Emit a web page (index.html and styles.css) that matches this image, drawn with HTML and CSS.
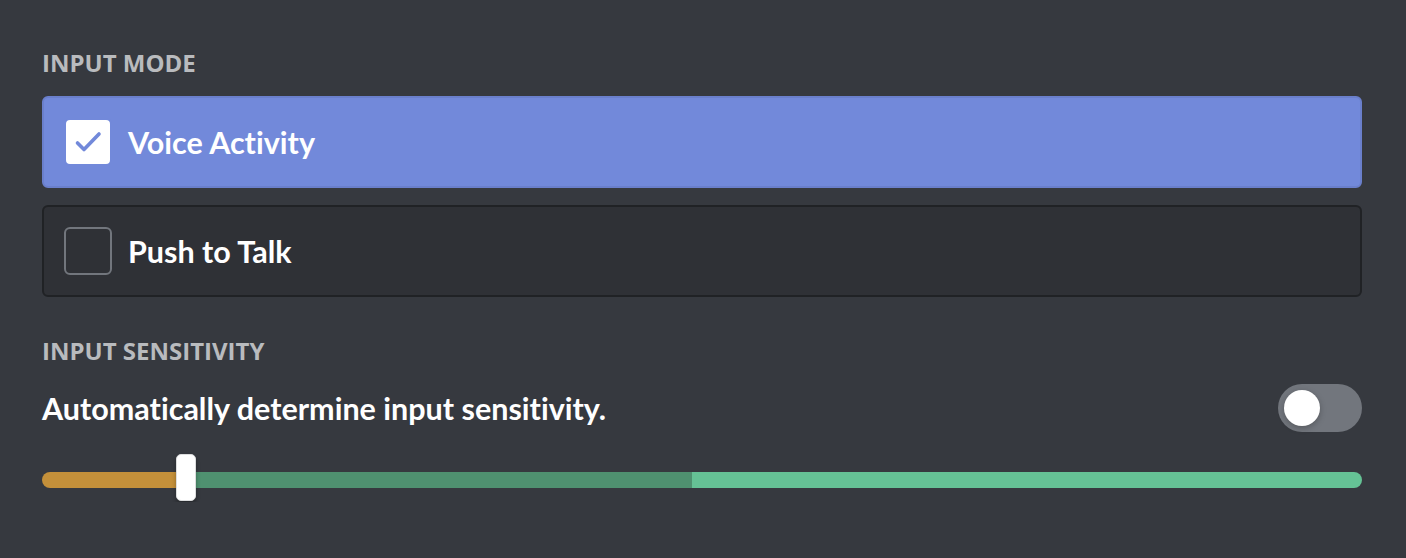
FILE: index.html
```html
<!DOCTYPE html>
<html>
<head>
<meta charset="utf-8">
<link rel="stylesheet" href="styles.css">
</head>
<body>
<main class="settings">
  <h5 class="label">Input Mode</h5>
  <div class="radio-group">
    <div class="option selected">
      <span class="box">
        <svg viewBox="0 0 44 44" width="44" height="44"><polyline points="11.5,23 18,29.5 33,14" fill="none" stroke="#7289da" stroke-width="3.6" stroke-linecap="round" stroke-linejoin="round"/></svg>
      </span>
      <span class="option-text">Voice Activity</span>
    </div>
    <div class="option">
      <span class="box"></span>
      <span class="option-text">Push to Talk</span>
    </div>
  </div>
  <h5 class="label label-sens">Input Sensitivity</h5>
  <div class="auto-row">
    <span class="desc">Automatically determine input sensitivity.</span>
    <span class="toggle"><span class="knob"></span></span>
  </div>
  <div class="slider">
    <div class="track">
      <div class="seg seg-orange" style="width:10.83%"></div>
      <div class="seg seg-dark" style="width:38.41%"></div>
      <div class="seg seg-light" style="width:50.76%"></div>
    </div>
    <div class="thumb" style="left:calc(10.9% - 10px)"></div>
  </div>
</main>
</body>
</html>
```
FILE: styles.css
```css
* { box-sizing: border-box; }
html, body {
  margin: 0;
  background: #36393f;
}
body {
  font-family: "Open Sans", "Noto Sans", sans-serif;
  color: #fff;
}
.settings {
  width: 1320px;
  margin-left: 42px;
  padding-top: 48px;
}
.label {
  margin: 0;
  font-size: 24px;
  line-height: 30px;
  font-weight: 700;
  text-transform: uppercase;
  color: #b9bbbe;
  letter-spacing: 0;
}
.radio-group {
  margin-top: 18px;
  display: flex;
  flex-direction: column;
  gap: 17px;
}
.option {
  height: 92px;
  display: flex;
  align-items: center;
  gap: 16px;
  padding-left: 20px;
  border: 2px solid #202225;
  border-radius: 6px;
  background: #2f3136;
}
.option.selected {
  background: #7289da;
  border-color: #6a7fcb;
}
.box {
  width: 48px;
  height: 48px;
  border: 2px solid #72767d;
  border-radius: 6px;
  display: flex;
  align-items: center;
  justify-content: center;
}
.selected .box {
  border-color: #7289da;
  background: #fff;
  border-radius: 6px;
}
.box svg { display: block; }
.option-text {
  font-family: "Lato", "Open Sans", sans-serif;
  font-size: 30.5px;
  font-weight: 700;
  font-variant-ligatures: none;
  color: #fff;
}
.label-sens {
  margin-top: 39px;
}
.auto-row {
  margin-top: 18px;
  display: flex;
  align-items: center;
  justify-content: space-between;
}
.desc {
  font-family: "Lato", "Open Sans", sans-serif;
  font-size: 30.5px;
  font-weight: 700;
  font-variant-ligatures: none;
  color: #fff;
}
.toggle {
  width: 84px;
  height: 48px;
  border-radius: 24px;
  background: #72767d;
  display: flex;
  align-items: center;
  padding-left: 6px;
}
.knob {
  width: 36px;
  height: 36px;
  border-radius: 50%;
  background: #fff;
  box-shadow: 0 2px 6px rgba(0,0,0,0.25);
}
.slider {
  position: relative;
  margin-top: 22px;
  height: 48px;
  padding-top: 18px;
}
.track {
  display: flex;
  height: 16px;
  border-radius: 8px;
  overflow: hidden;
}
.seg { height: 100%; }
.seg-orange { background: #c4903a; }
.seg-dark { background: #4f9170; }
.seg-light { background: #65c295; }
.thumb {
  position: absolute;
  top: 0;
  width: 20px;
  height: 47px;
  border-radius: 5px;
  background: #fff;
  border: 1px solid #dcddde;
  box-shadow: 0 3px 4px rgba(0,0,0,0.3);
}
```
